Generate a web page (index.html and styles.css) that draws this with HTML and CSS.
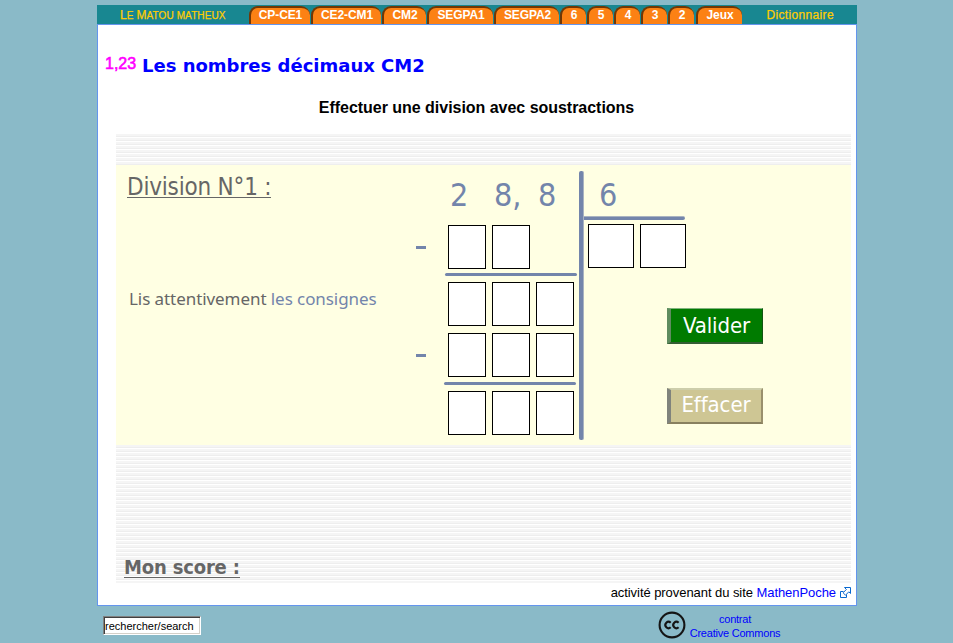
FILE: index.html
```html
<!DOCTYPE html>
<html lang="fr">
<head>
<meta charset="utf-8">
<title>Les nombres décimaux CM2</title>
<link rel="stylesheet" href="styles.css">
</head>
<body>
<div class="site">
  <nav class="nav">
    <a class="brand"><span class="cap">L</span>e <span class="cap">M</span>atou matheux</a>
    <div class="tabs">
      <a class="tab w61">CP-CE1</a><a class="tab w70">CE2-CM1</a><a class="tab w44">CM2</a><a class="tab w66">SEGPA1</a><a class="tab w65">SEGPA2</a><a class="tab">6</a><a class="tab">5</a><a class="tab">4</a><a class="tab">3</a><a class="tab">2</a><a class="tab games">Jeux</a>
    </div>
    <a class="dico">Dictionnaire</a>
  </nav>
  <main class="page">
    <h1 class="title"><span class="number">1,23</span><span class="chapter">Les nombres décimaux CM2</span></h1>
    <h2 class="subtitle"><span>Effectuer une division avec soustractions</span></h2>
    <section class="activity">
      <div class="stripes top"></div>
      <div class="board">
        <div class="intro">
          <div class="heading"><span>Division N°1 :</span></div>
          <p class="hint"><span>Lis attentivement <a>les consignes</a></span></p>
        </div>
        <div class="work">
          <div class="digits"><span>2</span><span>8,</span><span>8</span></div>
          <div class="row"><i class="minus"></i><b class="cell"></b><b class="cell"></b></div>
          <div class="rule"></div>
          <div class="row"><b class="cell"></b><b class="cell"></b><b class="cell"></b></div>
          <div class="row second"><i class="minus"></i><b class="cell"></b><b class="cell"></b><b class="cell"></b></div>
          <div class="rule low"></div>
          <div class="row"><b class="cell"></b><b class="cell"></b><b class="cell"></b></div>
        </div>
        <div class="bar"></div>
        <div class="result">
          <div class="divisor">6</div>
          <div class="line"></div>
          <div class="quotient"><b class="cell"></b><b class="cell"></b></div>
          <div class="button ok"><span>Valider</span></div>
          <div class="button clear"><span>Effacer</span></div>
        </div>
      </div>
      <div class="stripes bottom"><span class="score">Mon score :</span></div>
    </section>
    <p class="source"><span>activité provenant du site <a>MathenPoche</a></span>
      <svg width="11" height="11" viewBox="0 0 11 11" fill="none" stroke="#0868cf"><path d="M3.5 4.5h-3v6h6v-3"/><path fill="#fff" d="M4.5.5h6v6l-1.7-1.7-3.3 3.4-2.4-2.4 3.3-3.4z"/></svg>
    </p>
  </main>
  <footer class="footer">
    <div class="search"><span>rechercher/search</span></div>
    <svg class="cc" width="28" height="28" viewBox="0 0 28 28" fill="none" stroke="#151515"><circle cx="14" cy="14" r="12.4" stroke-width="2.1"/><path stroke-width="2.1" d="M12.7 11.8A3.1 3.1 0 1 0 12.7 16.2M20.6 11.8A3.1 3.1 0 1 0 20.6 16.2"/></svg>
    <a class="license">contrat<br>Creative Commons</a>
  </footer>
</div>
</body>
</html>
```
FILE: styles.css
```css
* { box-sizing: border-box; }
body { margin: 0; height: 643px; overflow: hidden; background: #8abac8; font-family: "Liberation Sans", Arial, sans-serif; }
.site { width: 760px; margin-left: 97px; padding-top: 5px; }
.nav { display: flex; height: 19px; background: #188791; color: #fc0; font-size: 12px; line-height: 20px; white-space: nowrap; }
.brand { width: 152px; padding-left: 23px; text-transform: uppercase; font-size: 10px; letter-spacing: .1px; -webkit-text-stroke: .25px #fc0; }
.cap { font-size: 12px; }
.tabs { display: flex; gap: 1px; padding-top: 1px; }
.tab { width: 26px; height: 18px; background: #fc8114; border-left: 2px solid #713705; border-top: 2px solid #713705; border-radius: 9px 9px 0 0; color: #fff; font-weight: bold; font-size: 12px; line-height: 15px; letter-spacing: -.1px; text-align: center; }
.w61 { width: 61px; }
.w70 { width: 70px; }
.w44 { width: 44px; }
.w65 { width: 65px; }
.w66 { width: 66px; }
.games { width: 46px; margin-left: 1px; }
.dico { margin-left: auto; padding-right: 23px; letter-spacing: .35px; -webkit-text-stroke: .25px #fc0; }
.page { height: 582px; background: #fff; border: 1px solid #6495ed; padding: 0 5px 0 7px; }
.title { display: flex; height: 67px; margin: 0; font-weight: normal; white-space: nowrap; }
.number { width: 37px; padding-top: 30px; color: #f0f; font-size: 16px; line-height: 18px; -webkit-text-stroke: .6px #f0f; }
.chapter { color: #00f; font: bold 18px/24px "DejaVu Sans", sans-serif; padding-top: 29px; }
.subtitle { height: 42px; margin: 0; padding: 6px 3px 0 0; font-size: 16px; line-height: 20px; letter-spacing: -.03px; text-align: center; }
.activity { width: 735px; margin-left: 11px; }
.stripes { background: repeating-linear-gradient(#f5f5f5 0 2px, #eee 2px 3px, #fff 3px 4px); }
.top { height: 31px; }
.bottom { height: 138px; padding: 110px 0 0 8px; }
.score { display: inline-block; color: #666; font: bold 20px/25px "DejaVu Sans Condensed", "DejaVu Sans", sans-serif; border-bottom: 1px solid #666; height: 23px; letter-spacing: -.17px; }
.board { display: flex; height: 280px; background: #ffffe3; font-family: "DejaVu Sans Condensed", "DejaVu Sans", sans-serif; }
.intro { width: 299px; padding: 6px 0 0 11px; color: #666; white-space: nowrap; }
.heading { height: 113px; font-size: 24px; line-height: 32px; letter-spacing: -.2px; }
.heading span { display: inline-block; height: 27px; border-bottom: 1px solid #666; }
.hint { margin: 0; padding-left: 2px; font: 17px/30px "Noto Sans", sans-serif; letter-spacing: -.07px; }
.hint a { color: #7385ab; }
.work { width: 163px; padding-right: 2px; }
.digits { display: flex; height: 60px; padding-left: 35px; color: #7385ab; font-size: 32px; line-height: 61px; }
.digits span { flex: none; width: 44px; }
.row { display: flex; gap: 6px; height: 44px; padding-left: 33px; }
.cell { flex: none; width: 38px; height: 44px; background: #fff; border: 1px solid #000; }
.minus { width: 10px; height: 3px; margin: 21px 16px 0 -32px; background: #7385ab; }
.rule { width: 132px; height: 3px; margin: 4px 0 6px 30px; border-radius: 2px; background: #7385ab; }
.second { margin-top: 7px; }
.low { margin-left: 29px; margin-top: 5px; }
.bar { width: 5px; height: 269px; margin: 6px 0 0 1px; border-radius: 2px; background: #7385ab; border-right: 1px solid #a9b3c0; }
.result { flex: 1; }
.divisor { height: 51px; padding: 1px 0 0 15px; color: #7385ab; font-size: 32px; line-height: 59px; }
.line { width: 101px; height: 4px; border-radius: 0 2px 2px 0; background: #7385ab; border-top: 1px solid #a9b3c0; }
.quotient { display: flex; gap: 6px; padding: 4px 0 0 4px; }
.quotient .cell { width: 46px; }
.button { width: 96px; height: 36px; margin-left: 83px; color: #fff; font: 22px/33px "DejaVu Sans Condensed", sans-serif; letter-spacing: -.1px; text-align: center; border: solid; }
.ok { margin-top: 40px; background: #007b00; border-width: 1px 1px 2px 4px; border-color: #82b37e #125512 #345d34 #5f8c5f; }
.clear { margin-top: 44px; background: #cec694; border-width: 2px 2px 2px 4px; border-color: #cdceab #99906c #88805f #80837c; line-height: 30px; }
.source { display: flex; align-items: center; justify-content: flex-end; gap: 4px; height: 18px; margin: 0; font-size: 13px; letter-spacing: -.06px; }
.source a, .license { color: #00f; }
.footer { display: flex; height: 37px; padding-left: 6px; font-size: 11px; }
.search { width: 98px; height: 19px; margin-top: 10px; padding-left: 1px; background: #fff; border: solid; border-width: 1px; border-color: #808080 #fff #fff #808080; box-shadow: inset 1px 1px #404040, inset -1px -1px #d4d0c8; line-height: 19px; white-space: nowrap; }
.cc { margin: 5px 0 0 457px; }
.license { width: 98px; padding-top: 6px; line-height: 14px; letter-spacing: -.22px; text-align: center; white-space: nowrap; }
```
